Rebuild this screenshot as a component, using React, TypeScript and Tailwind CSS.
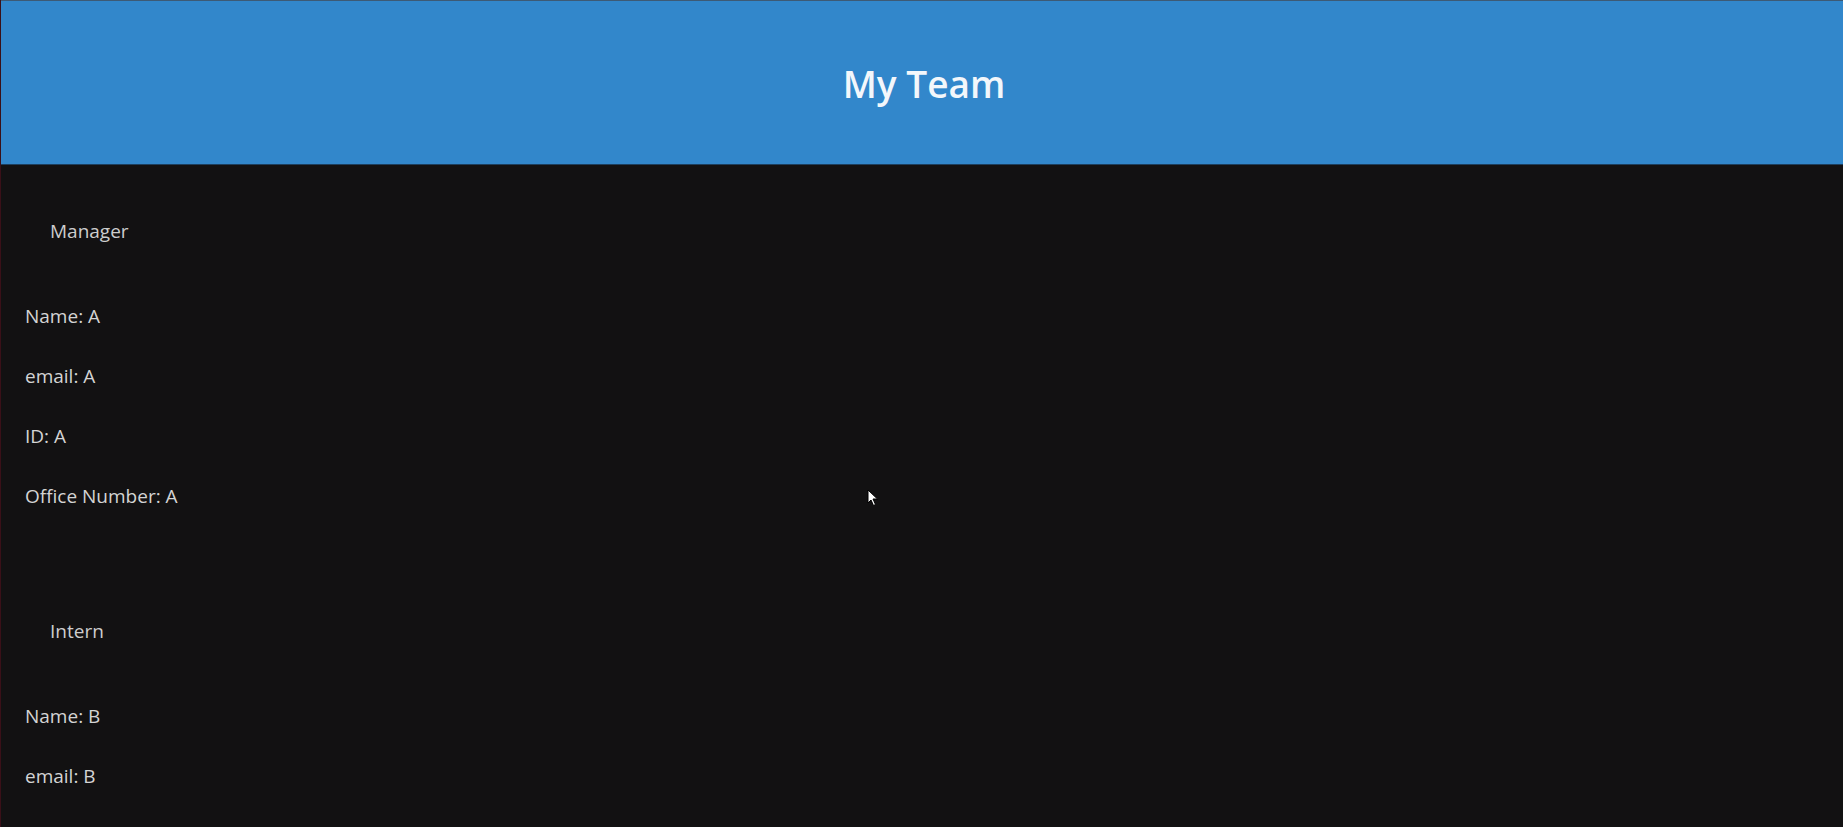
import React from "react";

const font = { fontFamily: '"Open Sans", "Noto Sans", sans-serif' };

function Field({ label, value }: { label: string; value: string }) {
  return (
    <p className="text-[19px] leading-[27px] text-[#d4d4d4]">
      {label}: {value}
    </p>
  );
}

export default function App() {
  return (
    <div
      className="relative h-[827px] w-full overflow-hidden bg-[#121112] border-l border-[#3a1018]"
      style={font}
    >
      <header className="h-[165px] flex items-center justify-center bg-[#3287cb] border-t border-[#3d5a75] border-b border-b-[#1d3f5e]">
        <h1 className="text-[37px] font-semibold text-[#f3f7fb] leading-none mt-[2px] pl-[4px]">
          My Team
        </h1>
      </header>

      <main className="flex flex-col">
        <section className="flex flex-col">
          <h2 className="mt-[53px] pl-[49px] text-[19px] leading-[27px] text-[#cdcdcd]">
            Manager
          </h2>
          <div className="mt-[58px] pl-[24px] flex flex-col gap-[33px]">
            <Field label="Name" value="A" />
            <Field label="email" value="A" />
            <Field label="ID" value="A" />
            <Field label="Office Number" value="A" />
          </div>
        </section>

        <section className="flex flex-col mt-[108px]">
          <h2 className="pl-[49px] text-[19px] leading-[27px] text-[#cdcdcd]">
            Intern
          </h2>
          <div className="mt-[58px] pl-[24px] flex flex-col gap-[33px]">
            <Field label="Name" value="B" />
            <Field label="email" value="B" />
            <Field label="ID" value="B" />
          </div>
        </section>
      </main>

      <svg
        className="absolute left-[866px] top-[489px]"
        width="12"
        height="18"
        viewBox="0 0 12 18"
      >
        <path
          d="M1 1 L1 14 L4 11 L6.5 16.5 L8.5 15.5 L6 10 L10.5 10 Z"
          fill="#ffffff"
          stroke="#000000"
          strokeWidth="1"
        />
      </svg>
    </div>
  );
}
